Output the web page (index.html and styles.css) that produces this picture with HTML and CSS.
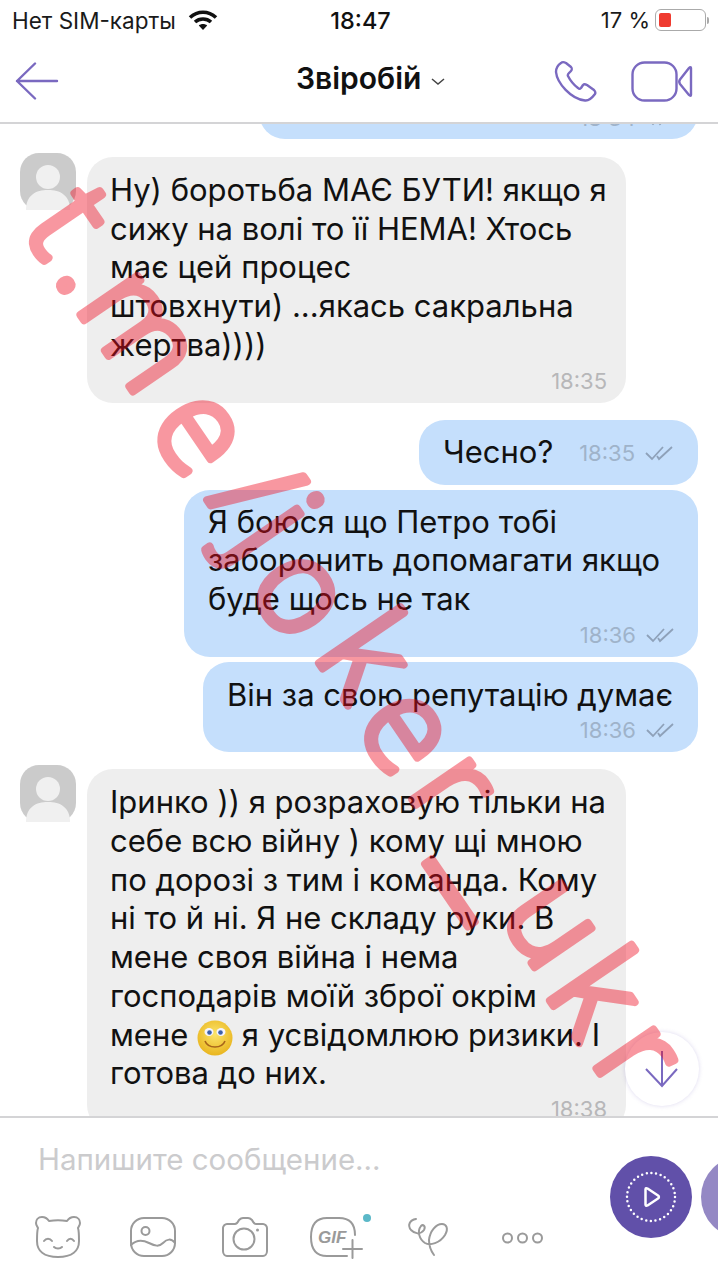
FILE: index.html
```html
<!DOCTYPE html>
<html lang="uk">
<head>
<meta charset="utf-8">
<title>Звіробій</title>
<link rel="stylesheet" href="styles.css">
</head>
<body>
<div class="screen">
  <div class="status">
    <div class="status-left">
      <span class="carrier">Нет SIM-карты</span>
      <svg class="wifi" width="30" height="20" viewBox="0 0 30 20"><path d="M2 7.500C9.500 0.500 20.500 0.500 28 7.500" class="wifi-arc"/><path d="M7 12C11.500 8 18.500 8 23 12" class="wifi-arc"/><path d="M15 20L10.800 15.500C13 13.500 17 13.500 19.200 15.500Z" class="wifi-fill"/></svg>
    </div>
    <span class="clock">18:47</span>
    <div class="status-right">
      <span class="percent">17 %</span>
      <span class="battery"><span class="battery-level"></span></span>
      <span class="battery-nub"></span>
    </div>
  </div>

  <header class="nav">
    <svg class="back" width="44" height="38" viewBox="0 0 44 38"><path d="M42 19H2M20 1.500L2 19L20 36.500"/></svg>
    <div class="title"><span>Звіробій</span>
      <svg class="chevron" width="14" height="7" viewBox="0 0 14 7"><path d="M1 1L7 6L13 1"/></svg>
    </div>
    <div class="nav-actions">
      <svg class="call" width="44" height="42" viewBox="0 0 44 42"><path d="M7 3C4 5 2 8 2 12C3 23 17 39 31 40.500C35 41 38 38 41 34C42 32 41 31 40 30L33 25C31 24 30 24 29 25L27 28C26 29 25 29 24 28C20 25 16 20 14 16C13.500 15 14 14 15 13L17 11C18 10 18 8 17 7L12 3C10 2 8 2 7 3Z"/></svg>
      <svg class="video" width="62" height="41" viewBox="0 0 62 41"><rect x="1.500" y="1.500" width="44" height="38" rx="12"/><path d="M60 7V34C60 35 59 35 58 34L49 23C48 21.500 48 20 49 18.500L58 7C59 6 60 6 60 7Z"/></svg>
    </div>
  </header>

  <main class="chat">
    <div class="bubble out out-clipped"><div class="meta"><span class="time">18:34</span><svg class="ticks" width="28" height="16" viewBox="0 0 28 16"><path d="M1 8L7 14L18 2M12 11L14 14L27 2"/></svg></div></div>

    <div class="row row-first">
      <svg class="avatar" width="56" height="57" viewBox="0 0 56 57"><rect width="56" height="57" rx="19" class="avatar-bg"/><circle cx="28" cy="24" r="12" class="avatar-fg"/><path d="M6 57C6 42 16 37 28 37C40 37 50 42 50 57Z" class="avatar-fg"/></svg>
      <div class="bubble in">
        <p class="msg">Ну) боротьба МАЄ БУТИ! якщо я<br>сижу на волі то її НЕМА! Хтось<br>має цей процес<br>штовхнути) ...якась сакральна<br>жертва))))</p>
        <div class="meta"><span class="time time-in">18:35</span></div>
      </div>
    </div>

    <div class="bubble out out-short">
      <p class="msg">Чесно?</p>
      <div class="meta"><span class="time">18:35</span><svg class="ticks" width="28" height="16" viewBox="0 0 28 16"><path d="M1 8L7 14L18 2M12 11L14 14L27 2"/></svg></div>
    </div>
    <div class="bubble out out-wide">
      <p class="msg">Я боюся що Петро тобі<br>заборонить допомагати якщо<br>буде щось не так</p>
      <div class="meta"><span class="time">18:36</span><svg class="ticks" width="28" height="16" viewBox="0 0 28 16"><path d="M1 8L7 14L18 2M12 11L14 14L27 2"/></svg></div>
    </div>
    <div class="bubble out out-mid">
      <p class="msg">Він за свою репутацію думає</p>
      <div class="meta"><span class="time">18:36</span><svg class="ticks" width="28" height="16" viewBox="0 0 28 16"><path d="M1 8L7 14L18 2M12 11L14 14L27 2"/></svg></div>
    </div>

    <div class="row row-second">
      <svg class="avatar" width="56" height="57" viewBox="0 0 56 57"><rect width="56" height="57" rx="19" class="avatar-bg"/><circle cx="28" cy="24" r="12" class="avatar-fg"/><path d="M6 57C6 42 16 37 28 37C40 37 50 42 50 57Z" class="avatar-fg"/></svg>
      <div class="bubble in">
        <p class="msg">Іринко )) я розраховую тільки на<br>себе всю війну ) кому щі мною<br>по дорозі з тим і команда. Кому<br>ні то й ні. Я не складу руки. В<br>мене своя війна і нема<br>господарів моїй зброї окрім<br>мене <svg class="emoji" width="36" height="36" viewBox="0 0 36 36"><defs><radialGradient id="face" cx="50%" cy="40%" r="60%"><stop offset="0" stop-color="#fbe46a"/><stop offset="1" stop-color="#e9b51f"/></radialGradient></defs><circle cx="18" cy="18" r="17.500" fill="url(#face)"/><ellipse cx="12" cy="12" rx="4.500" ry="4" fill="#f4f4ff"/><ellipse cx="24" cy="12" rx="4.500" ry="4" fill="#f4f4ff"/><circle cx="12.500" cy="12.500" r="2.300" fill="#3c5fa8"/><circle cx="23.500" cy="12.500" r="2.300" fill="#3c5fa8"/><path d="M8 21C11 29 25 29 28 21" fill="none" stroke="#a8651a" stroke-width="1.600"/></svg> я усвідомлюю ризики. І<br>готова до них.</p>
        <div class="meta"><span class="time time-in">18:38</span></div>
      </div>
    </div>
  </main>

  <button class="scroll-down" type="button" aria-label="Вниз">
    <svg width="36" height="38" viewBox="0 0 36 38"><path d="M18 1V36M2 19L18 36L33 19"/></svg>
  </button>

  <footer class="composer">
    <div class="composer-main">
      <div class="placeholder">Напишите сообщение...</div>
      <div class="tools">
        <svg class="tool" width="56" height="48" viewBox="0 0 56 48"><path d="M19 8C17 5 14 4 12 4C8 4 6 7 6 10C6 13 8 14 8 15C7 18 7 22 7 28C7 38 14 44 28 44C42 44 49 38 49 28C49 22 49 18 48 15C48 14 50 13 50 10C50 7 48 4 44 4C42 4 39 5 37 8C31 7 25 7 19 8Z"/><path d="M14 28C16 25 20 25 22 28M37 28C39 25 42 25 44 28M24 34C26 36 30 36 32 34"/></svg>
        <svg class="tool" width="56" height="48" viewBox="0 0 56 48"><rect x="8" y="5" width="44" height="38" rx="13"/><circle cx="22.500" cy="18" r="4"/><path d="M8 32C14 26 20 27 26 30C32 33 36 34 40 30C44 26 48 25 52 30"/></svg>
        <svg class="tool" width="56" height="48" viewBox="0 0 56 48"><path d="M11 11H19C21 11 22 9 23 7C24 6 25 5 27 5H32C34 5 35 6 36 7C37 9 38 11 40 11H47C49 11 51 13 51 15V38C51 41 49 43 47 43H11C9 43 7 41 7 38V15C7 13 9 11 11 11Z"/><circle cx="28" cy="26" r="10.500"/><circle cx="41.500" cy="17" r="1.500" class="tool-dot"/></svg>
        <svg class="tool" width="56" height="48" viewBox="0 0 56 48"><path d="M46 22C46 10 40 5 30 5H18C8 5 2 10 2 24C2 38 8 43 18 43H38M43.500 27V45M34 36H53"/><text x="9" y="30" class="gif-label">GIF</text><circle cx="58" cy="5" r="4" class="gif-badge"/></svg>
        <svg class="tool" width="56" height="48" viewBox="0 0 56 48"><path d="M14 6C8 7 5 12 9 17C13 21 18 22 22 17C24 13 21 11 19 13C15 18 17 26 23 30C28 33 38 30 43 22C47 15 44 11 40 11C34 11 28 18 27 27C27 33 29 38 32 42"/></svg>
        <svg class="tool" width="56" height="48" viewBox="0 0 56 48"><circle cx="12.500" cy="25" r="4.500"/><circle cx="27.500" cy="25" r="4.500"/><circle cx="42.500" cy="25" r="4.500"/></svg>
      </div>
    </div>
    <div class="composer-send">
      <button class="send send-primary" type="button" aria-label="Відео">
        <svg width="82" height="82" viewBox="0 0 82 82"><circle cx="41" cy="41" r="24" class="ring"/><path d="M35.500 33.500C35.500 32 36.500 32 37.500 32.500L48 39.500C49.200 40.300 49.200 41.700 48 42.500L37.500 49.500C36.500 50 35.500 50 35.500 48.500Z" class="play"/></svg>
      </button>
      <span class="send send-secondary"></span>
    </div>
  </footer>

  <svg class="watermark" width="718" height="1280" viewBox="0 0 718 1280" aria-hidden="true"><text transform="rotate(55.600 21 228)" class="watermark-text" x="21 78 115 255 349 397 442 537 618 702 776 856 946 1028" y="228 228 228 236 228 228 244 228 234 228 228 222 228 228">t.me/joker<tspan class="watermark-under">_</tspan>ukr</text></svg>
</div>
</body>
</html>
```

FILE: styles.css
```css
* { box-sizing: border-box; }
html, body { margin: 0; padding: 0; background: #fff; }
body { font-family: Inter, Roboto, "Liberation Sans", sans-serif; color: #111; }
p { margin: 0; }
button { border: 0; padding: 0; font: inherit; }

.screen {
  position: relative;
  width: 718px;
  height: 1280px;
  overflow: hidden;
  background: #fff;
  display: flex;
  flex-direction: column;
}

/* status bar */
.status {
  height: 40px;
  flex: none;
  display: grid;
  grid-template-columns: 1fr auto 1fr;
  align-items: center;
  padding: 0 9px 0 12px;
}
.status-left { display: flex; align-items: center; gap: 12px; }
.carrier { font-size: 22.500px; color: #1a1a1a; }
.wifi-arc { fill: none; stroke: #111; stroke-width: 3.600; }
.wifi-fill { fill: #111; }
.clock { font-size: 23.500px; font-weight: 500; color: #111; }
.status-right { display: flex; align-items: center; justify-content: flex-end; }
.percent { font-size: 22px; margin-right: 5px; color: #1a1a1a; }
.battery {
  width: 51px;
  height: 22px;
  border: 1.500px solid #aaa;
  border-radius: 6px;
  padding: 3px;
  display: flex;
}
.battery-level { width: 12px; background: #ef3b30; border-radius: 2px; }
.battery-nub { width: 2px; height: 7px; margin-left: 1px; background: #aaa; border-radius: 0 2px 2px 0; }

/* navigation */
.nav {
  height: 84px;
  flex: none;
  position: relative;
  display: flex;
  align-items: center;
  justify-content: space-between;
  padding: 0 25px 0 15px;
  border-bottom: 2px solid #d4d4d6;
}
.back path, .call path, .video rect, .video path {
  fill: none;
  stroke: #7a69c0;
  stroke-width: 2.400;
  stroke-linecap: round;
  stroke-linejoin: round;
}
.title {
  position: absolute;
  left: 296px;
  top: 18px;
  display: flex;
  align-items: center;
  gap: 10px;
  font-size: 30px;
  font-weight: 600;
  line-height: 40px;
  color: #111;
}
.chevron { margin-top: 6px; }
.chevron path { fill: none; stroke: #444; stroke-width: 1.500; }
.nav-actions { display: flex; align-items: center; gap: 33px; }

/* chat */
.chat {
  height: 993px;
  flex: none;
  overflow: hidden;
  display: flex;
  flex-direction: column;
  align-items: flex-end;
  padding-right: 20px;
}
.row {
  align-self: flex-start;
  display: flex;
  align-items: flex-start;
  gap: 11px;
  padding-left: 20px;
}
.row-first { margin-top: 14px; }
.row-second { margin-top: 13px; }
.avatar { flex: none; }
.avatar-bg { fill: #cbcbcb; }
.avatar-fg { fill: #f0f0f0; }

.bubble {
  border-radius: 26px;
  padding: 14px 24px 10px;
  flex: none;
}
.in { width: 539px; margin-top: 4px; background: #eeeeee; padding-left: 23px; }
.out { background: #c5dffc; }
.msg { font-size: 31px; line-height: 38.700px; white-space: nowrap; color: #111; }
.emoji { vertical-align: -4px; margin: -6px 0; }
.meta {
  height: 24px;
  margin-top: 4px;
  display: flex;
  align-items: center;
  justify-content: flex-end;
  gap: 10px;
}
.time { font-size: 22px; line-height: 24px; color: #9fb3ca; }
.time-in { color: #b7b7b9; margin-right: -5px; }
.ticks { flex: none; }
.ticks path { fill: none; stroke: #8ea1b9; stroke-width: 1.800; }

.out-clipped { width: 439px; height: 52px; margin-top: -37px; border-radius: 0 0 26px 26px; padding-top: 0; }
.out-clipped .meta { margin-top: 19px; }
.out-short {
  width: 279px;
  height: 65px;
  margin-top: 17px;
  padding: 0 25px 0 24px;
  display: flex;
  align-items: center;
  justify-content: space-between;
}
.out-short .meta { margin-top: 2px; }
.out-wide { width: 514px; margin-top: 5px; padding-top: 13px; }
.out-mid { width: 495px; margin-top: 5px; }

.scroll-down {
  position: absolute;
  left: 625px;
  top: 1032px;
  width: 74px;
  height: 74px;
  border-radius: 50%;
  background: #fff;
  box-shadow: 0 0 4px rgba(120, 105, 190, .25);
  display: flex;
  align-items: center;
  justify-content: center;
}
.scroll-down svg path { fill: none; stroke: #7a69c0; stroke-width: 2; }

/* composer */
.composer {
  flex: 1;
  display: flex;
  overflow: hidden;
  border-top: 2px solid #d4d4d6;
  margin-top: -1px;
}
.composer-main { width: 610px; flex: none; }
.placeholder {
  margin: 25px 0 0 38px;
  font-size: 29.500px;
  line-height: 32px;
  color: #cbcbcd;
}
.tools {
  margin-top: 38px;
  padding-left: 11px;
  display: grid;
  grid-template-columns: repeat(6, 93px);
  justify-items: center;
}
.tool { overflow: visible; }
.tool path, .tool rect, .tool circle {
  fill: none;
  stroke: #9a9a9a;
  stroke-width: 2;
  stroke-linecap: round;
  stroke-linejoin: round;
}
.tool .tool-dot { fill: #9a9a9a; stroke: none; }
.tool .gif-badge { fill: #5bb8c8; stroke: none; }
.gif-label { font-family: "Liberation Sans", sans-serif; font-size: 17px; font-weight: 700; font-style: italic; fill: #9a9a9a; }

.composer-send { display: flex; gap: 9px; margin-top: 38px; align-self: flex-start; }
.send { display: block; flex: none; width: 82px; height: 82px; border-radius: 50%; }
.send-primary { background: #6150a9; }
.send-secondary { background: #9488c4; }
.ring { fill: none; stroke: #fff; stroke-width: 2.500; stroke-linecap: round; stroke-dasharray: 0 4.700; }
.play { fill: none; stroke: #fff; stroke-width: 2.500; stroke-linejoin: round; }

/* watermark */
.watermark { position: absolute; left: 0; top: 0; pointer-events: none; opacity: .42; }
.watermark-text {
  font-family: "Open Sans", sans-serif;
  font-size: 130px;
  font-weight: 300;
  fill: #f00a1e;
  stroke: #f00a1e;
  stroke-width: 8px;
  stroke-linejoin: round;
  stroke-linecap: round;
}
.watermark-under { font-family: "Liberation Sans", sans-serif; }
```
